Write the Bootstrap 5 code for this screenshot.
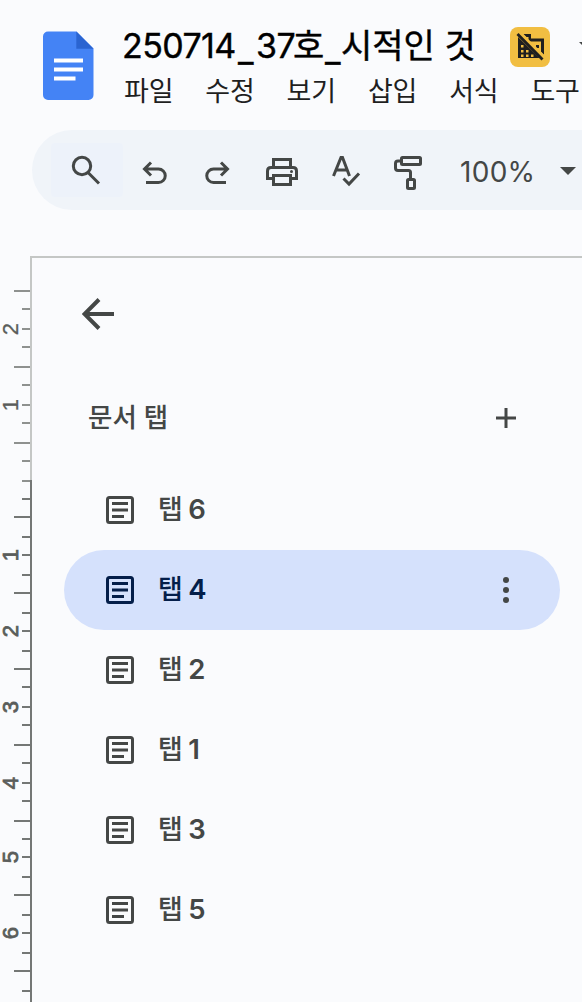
<!DOCTYPE html>
<html lang="ko">
<head>
<meta charset="utf-8">
<meta name="viewport" content="width=device-width, initial-scale=1">
<title>250714_37호_시적인 것</title>
<link rel="stylesheet" href="https://cdn.jsdelivr.net/npm/bootstrap@5.3.0/dist/css/bootstrap.min.css">
<style>
  body { background: #fafbfd; color: #444746; font-family: "Inter", "Noto Sans CJK KR", sans-serif; width: 582px; height: 1002px; overflow: hidden; }
  svg { display: block; flex: none; }
  .app-header { height: 130px; padding: 24px 0 0 43px; }
  .doc-logo { margin-top: 7px; }
  .title-block { margin-left: 28px; }
  .title-row { height: 46px; }
  .doc-title { font-size: 34px; line-height: 42px; height: 46px; color: #000; font-weight: 400; -webkit-text-stroke: .4px #000; width: 388px; white-space: nowrap; display: flex; }
  .doc-title span { flex: none; white-space: pre; padding-top: 1px; }
  .doc-title .t-num { letter-spacing: -.6px; }
  .doc-title .t-line { padding-top: 5px; }
  .menu-row { height: 40px; gap: 31px; padding: 2px 0 0 2px; font-size: 27px; line-height: 40px; color: #1f1f1f; }
  .menu-row span { width: 50.3px; white-space: nowrap; letter-spacing: -.2px; }
  .toolbar { height: 80px; margin-left: 32px; background: #f0f4f9; border-radius: 40px 0 0 40px; }
  .search-box { width: 72px; height: 54px; margin-left: 19px; background: #edf2fa; border-radius: 4px; }
  .zoom-box { width: 96px; padding: 4px 0 0 6px; }
  .zoom-label { font-size: 28px; letter-spacing: .3px; }
  .workspace { margin-top: 46px; height: 746px; }
  .tabs-panel { width: 550px; border-top: 2px solid #c4c7c5; }
  .back-row { height: 112px; padding: 40px 0 0 50px; }
  .panel-head { height: 100px; padding: 0 66px 4px 56px; font-size: 26.500px; font-weight: 500; }
  .panel-head span { padding-bottom: 1px; }
  .tab-item { height: 80px; width: 496px; margin-left: 32px; padding: 0 40px 0 42px; border-radius: 40px; font-size: 27px; font-weight: 500; }
  .tab-item.active { background: #d5e1fc; color: #041e49; }
  .tab-item b { font-size: 27.500px; font-weight: 600; margin-left: 5.500px; }
  .tab-name { margin-left: 24px; line-height: 40px; padding-bottom: 2px; }
</style>
</head>
<body>
<header class="app-header d-flex">
  <svg class="doc-logo" width="51" height="70" viewBox="0 0 51 70">
    <path fill="#4483f5" d="M5 .5h28.500L50.500 17.500V64a5 5 0 0 1-5 5H5a5 5 0 0 1-5-5V5.500a5 5 0 0 1 5-5z"/>
    <path fill="#2a64d1" d="M33.300.5l17.200 17.300H33.300z"/>
    <path fill="#fff" d="M11 27.500h29v4H11zM11 36.500h29v4H11zM11 45.500h21.500v4H11z"/>
  </svg>
  <div class="title-block">
    <div class="title-row d-flex align-items-center">
      <div class="doc-title"><span class="t-num" style="width:116px">250714</span><span class="t-line" style="width:18px">_</span><span class="t-num" style="width:37px">37</span><span style="width:32px">호</span><span class="t-line" style="width:16px">_</span><span>시적인 것</span></div>
      <svg width="72" height="40" viewBox="0 0 72 40">
        <rect width="40" height="40" rx="8" fill="#f1be42"/>
        <path fill="#1f1f1f" d="M8 10v21h21.500zM13.500 7H21v4.500h13V28l-3-3V14.500H18.500V10h-2z"/>
        <path fill="#1f1f1f" d="M26 18h3v3h-3z"/>
        <path fill="#f1be42" d="M11 18h2.500v2.500H11zM11 23h2.500v2.500H11zM16 23h2.500v2.500H16zM11 27.500h2.500V30H11zM16 27.500h2.500V30H16zM21 27.500h2.500V30H21z"/>
        <path stroke="#f1be42" stroke-width="2" d="M10 5.500l25 24.500"/>
        <path stroke="#1f1f1f" stroke-width="2.800" d="M7.500 7l25 25.500"/>
        <path fill="#444746" d="M69 15h16l-8 8z"/>
      </svg>
    </div>
    <nav class="menu-row d-flex"><span>파일</span><span>수정</span><span>보기</span><span>삽입</span><span>서식</span><span>도구</span></nav>
  </div>
</header>

<div class="toolbar d-flex align-items-center">
  <div class="search-box">
    <svg width="72" height="54" fill="none" stroke="#444746" stroke-width="3"><circle cx="31" cy="23" r="8.700"/><path d="M37 29.500l11 11"/></svg>
  </div>
  <svg width="331" height="80" viewBox="123 130 331 80" fill="none" stroke="#444746" stroke-width="3">
    <path d="M146 182.500h12.500a6.750 6.750 0 0 0 0-13.500H144.500M151 162.500l-6.500 6.500 6.500 6.500"/>
    <path d="M226 182.500h-12.500a6.750 6.750 0 0 1 0-13.500H227.500M221 162.500l6.500 6.500-6.500 6.500"/>
    <path d="M273.500 168v-8.500h17v8.500M272 178.500h-4.500V171q0-3.500 3.500-3.500h22q3.500 0 3.500 3.500v7.500H292M273.500 175.500h17v9h-17z"/>
    <circle cx="291.500" cy="171.500" r="1.500" fill="#444746" stroke="none"/>
    <path d="M333.500 176l7.500-18.500h1.500L349.500 176M336.500 170h10.500"/><path d="M343.500 178.500l5.500 5.500 10-10.500"/>
    <rect x="401.500" y="157.500" width="19" height="7" rx="1"/><path d="M401 161h-3q-2.500 0-2.500 2.500v4.500q0 2.500 2.500 2.500h10.500q2 0 2 2v5.500"/><rect x="407.500" y="179.500" width="7" height="9" rx="1"/>
  </svg>
  <div class="zoom-box"><span class="zoom-label">100%</span></div>
  <svg width="32" height="80"><path fill="#444746" d="M10 37h16l-8 8z"/></svg>
</div>

<main class="workspace d-flex">
  <svg id="ruler" width="32" height="746" viewBox="0 256 32 746" font-family="Liberation Sans, sans-serif" font-size="22" fill="#5a5d5b"></svg>
  <section class="tabs-panel">
    <div class="back-row">
      <svg width="34" height="34" fill="none" stroke="#444746" stroke-width="4"><path d="M32 16H3M17 1.500L2.500 16 17 30.500"/></svg>
    </div>
    <div class="panel-head d-flex align-items-center justify-content-between">
      <span>문서 탭</span>
      <svg width="20" height="20" stroke="#444746" stroke-width="3"><path d="M0 10h20M10 0v20"/></svg>
    </div>
    <div id="tab-list"></div>
  </section>
</main>
<script>
  document.getElementById('tab-list').innerHTML = [6, 4, 2, 1, 3, 5].map(n => `
    <div class="tab-item d-flex align-items-center ${n === 4 ? 'active' : ''}">
      <svg width="28" height="28" fill="none" stroke="currentColor" stroke-width="3"><rect x="1.500" y="1.500" width="25" height="25" rx="2"/><path d="M6 7.500h16M6 14h16M6 20.500h12"/></svg>
      <span class="tab-name">탭<b>${n}</b></span>
      ${n === 4 ? '<svg class="ms-auto" width="28" height="28" fill="#444746"><circle cx="14" cy="4" r="3"/><circle cx="14" cy="14" r="3"/><circle cx="14" cy="24" r="3"/></svg>' : ''}
    </div>`).join('');

  const ticks = [291,309,329,347,367,385,405,423,443,461,481,499,517,537,555,575,593,613,631,651,669,687,707,725,745,763,783,801,821,839,857,877,895,915,933,953,971,991];
  const longTicks = [291,367,443,517,593,669,745,821,895,971];
  let r = '<path fill="#c4c7c5" d="M30 256h2v224h-2z"/><path fill="#747775" d="M30 480h2v522h-2z"/>';
  ticks.forEach(y => {
    const x = longTicks.includes(y) ? 14 : 22;
    r += `<rect x="${x}" y="${y - 1}" width="${30 - x}" height="2" fill="${y < 482 ? '#8e918f' : '#747775'}"/>`;
  });
  [[2,329],[1,405],[1,555],[2,631],[3,707],[4,783],[5,857],[6,933]].forEach(([n, y]) => {
    r += `<text transform="translate(18 ${y}) rotate(-90)" text-anchor="middle" stroke="#5a5d5b" stroke-width="${y > 480 ? .8 : .3}">${n}</text>`;
  });
  document.getElementById('ruler').innerHTML = r;
</script>
<script src="https://cdn.jsdelivr.net/npm/bootstrap@5.3.0/dist/js/bootstrap.bundle.min.js"></script>
</body>
</html>
